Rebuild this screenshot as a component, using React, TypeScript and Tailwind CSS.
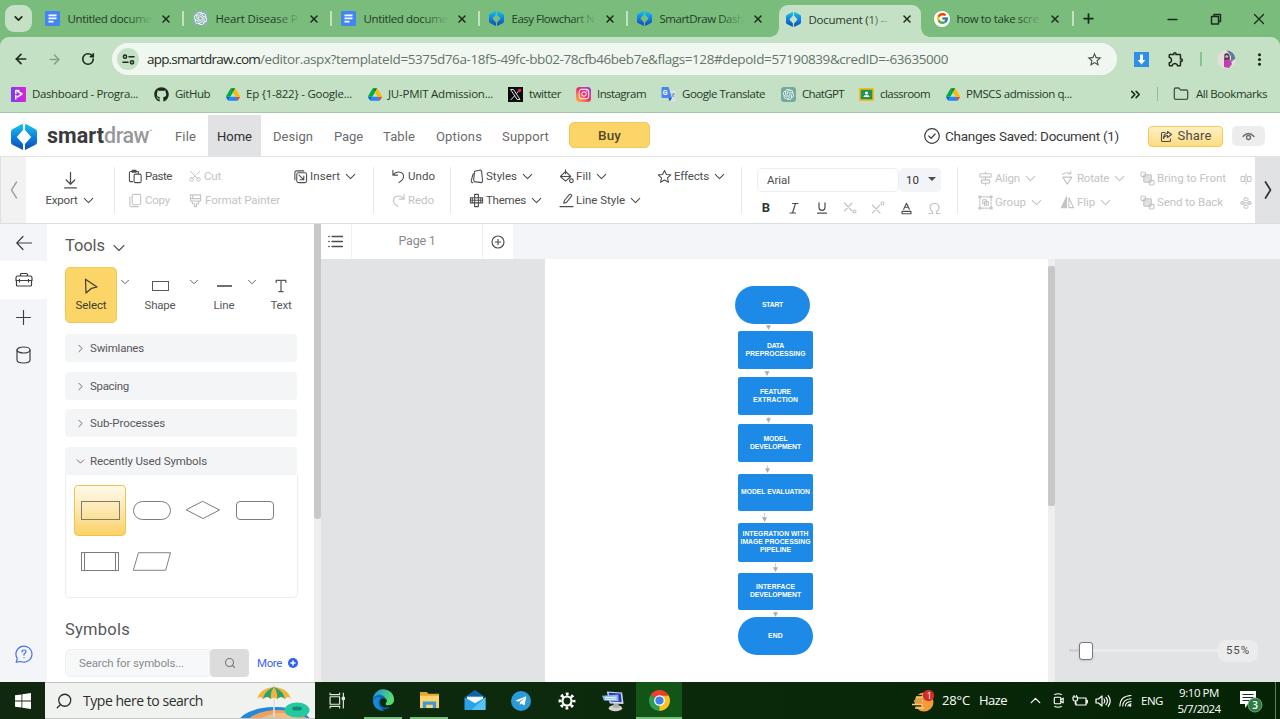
import React, { useLayoutEffect, useRef, useState } from "react";
import { X, Plus, ArrowLeft, ArrowRight, RotateCw, ChevronDown, ChevronUp, ChevronRight, ChevronsRight, Folder, Search, Scissors } from "lucide-react";
import { FaGithub, FaInstagram, FaTelegramPlane } from "react-icons/fa";
import { FcGoogle } from "react-icons/fc";
import { SiOpenai } from "react-icons/si";
import { MdOutlineExtension, MdStarBorder, MdMoreVert } from "react-icons/md";

type Kids = { children?: React.ReactNode };

/* A one-line label whose tracking is computed so that it fills w pixels. */
function Fit({ w, className = "", text }: { w: number; className?: string; text: string }) {
  const ref = useRef<HTMLSpanElement>(null);
  const [gap, setGap] = useState(0);
  useLayoutEffect(() => {
    const el = ref.current;
    if (!el) return;
    el.style.letterSpacing = "0px";
    const natural = el.getBoundingClientRect().width;
    setGap((w - natural) / text.length);
    el.style.letterSpacing = (w - natural) / text.length + "px";
  }, [w, text]);
  return (
    <span ref={ref} className={"inline-block shrink-0 whitespace-nowrap " + className} style={{ letterSpacing: gap }}>
      {text}
    </span>
  );
}

function Svg({ className = "", box = "0 0 16 16", sw = 1, children }: Kids & { className?: string; box?: string; sw?: number }) {
  return (
    <svg viewBox={box} className={"shrink-0 " + className} fill="none" stroke="currentColor" strokeWidth={sw} strokeLinecap="round" strokeLinejoin="round">
      {children}
    </svg>
  );
}

/* ---------- logos ---------- */
const DocsIcon = () => (
  <Svg className="size-[15px]" box="0 0 15 15" sw={1.7}>
    <rect width="15" height="15" rx="1.2" fill="#4285f4" stroke="none" />
    <path d="M3.5 4.3h8M3.5 7.4h8M3.5 10.6h5" stroke="#fff" strokeLinecap="butt" />
  </Svg>
);

const SmartLogo = ({ className = "size-[15px]" }: { className?: string }) => (
  <svg viewBox="0 0 26 26" className={"shrink-0 " + className}>
    <defs>
      <linearGradient id="sd" x1="0" y1="0" x2="0" y2="1">
        <stop offset="0" stopColor="#14c4f0" />
        <stop offset="0.5" stopColor="#1080dd" />
        <stop offset="1" stopColor="#0a4fb4" />
      </linearGradient>
    </defs>
    <path fill="url(#sd)" d="M12 0v6L5.800 13l6.200 7v6L1.500 20.800Q0 20 0 18.300V7.700Q0 6 1.500 5.200L10 .6Z" />
    <path fill="url(#sd)" d="M14 0v6L20.200 13 14 20v6L24.500 20.800Q26 20 26 18.300V7.700Q26 6 24.500 5.200L16 .6Z" />
  </svg>
);

const GptIcon = () => (
  <span className="flex size-[15px] shrink-0 items-center justify-center rounded-[3px] bg-[#74aa9c] text-white">
    <SiOpenai className="size-[11px]" />
  </span>
);

const HeartGpt = () => (
  <span className="flex size-[15px] shrink-0 items-center justify-center rounded-[3px] bg-[#86b3a9] text-white">
    <SiOpenai className="size-[13px]" />
  </span>
);

const GoogleIcon = () => (
  <span className="flex size-[16px] shrink-0 items-center justify-center rounded-full bg-white">
    <FcGoogle className="size-[13px]" />
  </span>
);

const DriveIcon = () => (
  <svg viewBox="0 0 87.3 78" className="h-[13px] w-[14px] shrink-0">
    <path d="m6.600 66.850 3.850 6.650c.8 1.400 1.950 2.500 3.300 3.300l13.750-23.800h-27.500c0 1.550.4 3.100 1.200 4.500z" fill="#0066da" />
    <path d="m43.650 25-13.750-23.800c-1.350.8-2.500 1.900-3.300 3.300l-25.400 44a9.060 9.060 0 0 0-1.200 4.500h27.500z" fill="#00ac47" />
    <path d="m73.550 76.800c1.350-.8 2.500-1.900 3.300-3.300l1.600-2.750 7.650-13.250c.8-1.400 1.200-2.950 1.200-4.500h-27.500l5.850 11.500z" fill="#ea4335" />
    <path d="m43.650 25 13.750-23.800c-1.350-.8-2.900-1.200-4.500-1.200h-18.500c-1.600 0-3.150.45-4.500 1.200z" fill="#00832d" />
    <path d="m59.800 53h-32.300l-13.750 23.800c1.350.8 2.900 1.200 4.500 1.200h50.800c1.600 0 3.150-.45 4.500-1.200z" fill="#2684fc" />
    <path d="m73.400 26.500-12.700-22c-.8-1.400-1.950-2.500-3.300-3.300l-13.750 23.800 16.150 28h27.450c0-1.550-.4-3.100-1.200-4.500z" fill="#ffba00" />
  </svg>
);

const PhitronIcon = () => (
  <Svg className="size-[15px]" box="0 0 15 15" sw={1.5}>
    <defs>
      <linearGradient id="ph" x1="0" y1="0" x2="1" y2="0">
        <stop offset="0" stopColor="#7a3cf5" />
        <stop offset="1" stopColor="#e21fd8" />
      </linearGradient>
    </defs>
    <rect width="15" height="15" rx="1" fill="url(#ph)" stroke="none" />
    <path d="M4.800 12V8.500M4.800 6.500v-3l3 0M7 4.500l4 2.500-4.500 2.800" stroke="#fff" />
  </Svg>
);

const XIcon = () => (
  <Svg className="size-[15px]" box="0 0 15 15" sw={1}>
    <rect width="15" height="15" fill="#0c0c0c" stroke="none" />
    <path d="M3 2.500h2.500l6.500 10H9.500Z" stroke="#ddd" />
    <path d="M12 2.500 8.500 6.500M6.500 9 3 12.700" stroke="#ddd" />
    <circle cx="11.500" cy="3.500" r="1.700" fill="#ee2244" stroke="none" />
  </Svg>
);

const InstaIcon = () => (
  <span className="flex size-[15px] shrink-0 items-center justify-center rounded-[3.500px] bg-linear-to-tr from-[#fdc030] via-[#f02b60] to-[#9a30d0] text-white">
    <FaInstagram className="size-[12px]" />
  </span>
);

const TranslateIcon = () => (
  <svg viewBox="0 0 15 15" className="size-[15px] shrink-0">
    <path d="M6 4h7.500q1 0 1 1v8.500q0 1-1 1H9Z" fill="#dfe3e8" />
    <path d="M1.500 0H7.600L11 11H1.500q-1 0-1-1V1q0-1 1-1Z" fill="#4a86f0" />
    <path d="M7.500 11H11l-2.300 3.500Z" fill="#2a56c6" />
    <text x="1.800" y="8" fontSize="7" fontWeight="700" fill="#fff" fontFamily="Roboto, sans-serif">G</text>
    <path d="M10.500 7h3.500M12.300 6v1M11 9.500q2-1 2.300-2.500M11.400 8l2 2.500" stroke="#7b8794" strokeWidth=".8" fill="none" />
  </svg>
);

const ClassroomIcon = () => (
  <svg viewBox="0 0 15 13" className="h-[13px] w-[15px] shrink-0">
    <rect width="15" height="13" rx="1" fill="#f6bd17" />
    <rect x="1.700" y="1.700" width="11.600" height="9.600" fill="#23915a" />
    <circle cx="7.500" cy="5" r="1.500" fill="#fff" />
    <path d="M4.500 9q0-2 3-2t3 2Z" fill="#fff" />
  </svg>
);

/* ---------- browser chrome ---------- */
const ui = "font-['Open_Sans','Noto_Sans',sans-serif]";
const app = "font-['Roboto','Liberation_Sans',sans-serif]";

function Tab({ icon, label, w, active, tail = true }: { icon: React.ReactNode; label: string; w: number; active?: boolean; tail?: boolean }) {
  return (
    <div className="flex w-[148px] shrink-0 items-center">
      <div className="flex w-[22.500px] shrink-0">{icon}</div>
      <div className="relative w-[85px] shrink-0 pt-px text-[11.500px] leading-[18px] text-[#263a28]">
        <Fit w={w} text={label} />
        <span className={"absolute inset-y-0 right-0 w-[26px] bg-linear-to-r from-transparent " + (active ? "to-[#c5e1c5]" : "to-[#79bc7c]")} />
      </div>
      <X className="ml-[7.500px] size-[12px] text-[#1c2a1d]" strokeWidth={3} />
      <span className={"ml-[10px] h-[15px] w-[1.500px] " + (tail ? "bg-[#c0e2c0]" : "")} />
    </div>
  );
}

function TabStrip() {
  return (
    <div className="flex h-[37px] shrink-0 items-center bg-[#79bc7c]">
      <div className="ml-[5px] flex h-[27px] w-[27px] shrink-0 items-center justify-center rounded-[9px] bg-[#c5e1c5]">
        <ChevronDown className="size-[13px] text-[#1c2a1d]" strokeWidth={3.200} />
      </div>
      <div className="ml-[13px] flex h-full">
        <Tab icon={<DocsIcon />} label="Untitled docume" w={84} />
        <Tab icon={<HeartGpt />} label="Heart Disease P" w={82} />
        <Tab icon={<DocsIcon />} label="Untitled docume" w={84} />
        <Tab icon={<SmartLogo />} label="Easy Flowchart N" w={83} />
        <Tab icon={<SmartLogo />} label="SmartDraw Dash" w={84} tail={false} />
      </div>
      <div className="-mx-[6px] flex h-full w-[154px] items-end">
        <div className="relative flex h-[32px] w-[142px] items-center rounded-t-[9px] bg-[#c5e1c5] pl-[7px] pb-[4px]">
          <span className="absolute bottom-0 -left-[9px] size-[9px] bg-[radial-gradient(circle_at_top_left,#79bc7c_8.500px,#c5e1c5_9px)]" />
          <span className="absolute -right-[9px] bottom-0 size-[9px] bg-[radial-gradient(circle_at_top_right,#79bc7c_8.500px,#c5e1c5_9px)]" />
          <Tab icon={<SmartLogo />} label="Document (1) --" w={79} active tail={false} />
        </div>
      </div>
      <div className="ml-[7px] flex h-full">
        <Tab icon={<GoogleIcon />} label="how to take scre" w={82} tail={false} />
      </div>
      <span className="-ml-[10px] h-[15px] w-[1.500px] bg-[#c0e2c0]" />
      <Plus className="ml-[7px] size-[15px] text-[#1c2a1d]" strokeWidth={2.800} />
      <Svg className="ml-auto size-[12px] text-[#1c2a1d]" box="0 0 12 12" sw={1.300}><path d="M1 6.500h9" /></Svg>
      <Svg className="ml-[31px] size-[12px] text-[#1c2a1d]" box="0 0 12 12" sw={1.400}><path d="M1.500 3.500h7v7.500h-7ZM4 3.500v-2h6.500v7H8.500" /></Svg>
      <Svg className="mr-[15px] ml-[31px] size-[12px] text-[#1c2a1d]" box="0 0 12 12" sw={1.300}><path d="m1.500 1.500 9 9M10.500 1.500l-9 9" /></Svg>
    </div>
  );
}

function AddressRow() {
  return (
    <div className="flex h-[44px] shrink-0 items-center">
      <ArrowLeft className="ml-[13px] size-[16px] text-[#1c2a1d]" strokeWidth={2.500} />
      <ArrowRight className="ml-[18px] size-[15px] text-[#84a286]" strokeWidth={2.300} />
      <RotateCw className="ml-[19px] size-[14px] text-[#1c2a1d]" strokeWidth={2.800} />
      <div className="ml-[17px] flex h-[32px] w-[1005px] shrink-0 items-center rounded-full bg-[#f0f7f0] text-[13.500px] text-[#66746a]">
        <div className="ml-[5px] flex size-[22px] items-center justify-center rounded-full bg-[#c5e1c5] text-[#1c2a1d]">
          <Svg className="size-[13px]" box="0 0 13 13" sw={1.500}>
            <circle cx="3" cy="3.700" r="1.600" /><path d="M7 3.700h5M1 9.300h5" /><circle cx="10" cy="9.300" r="1.600" />
          </Svg>
        </div>
        <Fit w={113} className="ml-[8px] text-[#1f2b21]" text="app.smartdraw.com" />
        <Fit w={688} text="/editor.aspx?templateId=5375d76a-18f5-49fc-bb02-78cfb46beb7e&flags=128#depoId=57190839&credID=-63635000" />
        <MdStarBorder className="mr-[14px] ml-auto size-[17px] text-[#47554a]" />
      </div>
      <svg viewBox="0 0 15 15" className="ml-[17px] size-[15px] shrink-0"><rect width="15" height="15" fill="#2f8fe6" /><path d="M6 2.500h3V8h2.300L7.500 12.500 3.700 8H6Z" fill="#fff" /></svg>
      <MdOutlineExtension className="ml-[18px] size-[18px] text-[#1c2a1d]" />
      <span className="ml-[15px] h-[14px] w-[1.500px] bg-[#86c489]" />
      <svg viewBox="0 0 19 19" className="ml-[15px] size-[19px] shrink-0">
        <circle cx="9.500" cy="9.500" r="9.300" fill="#e6dcdc" />
        <path d="M9.500 .4a9 9 0 0 1 9 8L14 12V6Z" fill="#5c7f9c" />
        <path d="M7.500 4q3.500-2 5 1.500l.5 8-6 1Z" fill="#41304a" />
        <path d="m7 10 6-1 2 5-3 4-5-1Z" fill="#c03fae" />
        <circle cx="9.800" cy="6.500" r="1.600" fill="#dba893" />
      </svg>
      <MdMoreVert className="ml-[14px] size-[19px] text-[#1c2a1d]" />
    </div>
  );
}

function Mark({ icon, text, w, pad, drive }: { icon?: React.ReactNode; text: string; w: number; pad: string; drive?: boolean }) {
  return (
    <div className={"flex shrink-0 items-center " + pad}>
      <span className={"flex shrink-0 " + (drive ? "w-[20px]" : "w-[21px]")}>{drive ? <DriveIcon /> : icon}</span>
      <Fit w={w} text={text} />
    </div>
  );
}

function Bookmarks() {
  return (
    <div className="flex h-[30px] shrink-0 items-center pl-[11px] pb-[4px] text-[11.500px] leading-[16px] text-[#263a28]">
      <Mark icon={<PhitronIcon />} text="Dashboard - Progra..." w={106} pad="pr-[16px]" />
      <Mark icon={<FaGithub className="size-[15px] text-[#1c2a1d]" />} text="GitHub" w={35} pad="pr-[16px]" />
      <Mark drive text="Ep {1-822} - Google..." w={106} pad="pr-[16px]" />
      <Mark drive text="JU-PMIT Admission..." w={105} pad="pr-[15px]" />
      <Mark icon={<XIcon />} text="twitter" w={32} pad="pr-[15px]" />
      <Mark icon={<InstaIcon />} text="Instagram" w={49} pad="pr-[15px]" />
      <Mark icon={<TranslateIcon />} text="Google Translate" w={83} pad="pr-[16px]" />
      <Mark icon={<GptIcon />} text="ChatGPT" w={42} pad="pr-[15px]" />
      <Mark icon={<ClassroomIcon />} text="classroom" w={50} pad="pr-[16px]" />
      <Mark drive text="PMSCS admission q..." w={106} pad="" />
      <ChevronsRight className="ml-auto size-[15px] text-[#1c2a1d]" strokeWidth={2.600} />
      <span className="ml-[14px] h-[14px] w-[1.500px] bg-[#86c489]" />
      <Folder className="ml-[15px] size-[16px] text-[#47554a]" strokeWidth={2} />
      <Fit w={71} className="mr-[13px] ml-[7px]" text="All Bookmarks" />
    </div>
  );
}

/* ---------- application header ---------- */
function Header() {
  return (
    <div className="flex h-[43px] shrink-0 items-center border-b border-[#e2e2e3] bg-white text-[13px] text-[#6b6b6d]">
      <SmartLogo className="mt-[3px] ml-[11px] h-[26px] w-[26px]" />
      <div className="ml-[10px] flex h-full w-[106px] shrink-0 items-center pt-[2px] text-[21.500px] font-bold">
        <Fit w={57} className="text-[#3a3a3c]" text="smart" />
        <Fit w={45} className="font-medium text-[#98989a]" text="draw" />
        <span className="mb-[9px] text-[5px] text-[#98989a]">™</span>
      </div>
      <Fit w={21} className="mt-[3px] ml-[22px]" text="File" />
      <div className="ml-[12px] flex h-[41px] w-[53px] shrink-0 items-center justify-center self-end bg-[#e1e2e4] pt-[2px] text-[#2e2e30]">
        <Fit w={35} text="Home" />
      </div>
      <Fit w={40} className="mt-[3px] ml-[12px]" text="Design" />
      <Fit w={29} className="mt-[3px] ml-[21px]" text="Page" />
      <Fit w={32} className="mt-[3px] ml-[20px]" text="Table" />
      <Fit w={46} className="mt-[3px] ml-[21px]" text="Options" />
      <Fit w={47} className="mt-[3px] ml-[20px]" text="Support" />
      <div className="ml-[20px] flex h-[26px] w-[81px] shrink-0 items-center justify-center rounded-[5px] border border-[#f3c65a] bg-[#fbd568] text-[13.500px] text-[#55492a]">
        <Fit w={23} className="font-medium" text="Buy" />
      </div>
      <div className="mt-[2px] ml-[274px] flex shrink-0 items-center text-[13.500px] text-[#3a3a3c]">
        <Svg className="size-[16px]" sw={1.200}><circle cx="8" cy="8" r="7.300" /><path d="m4.800 8 2.300 2.300 4-4.300" /></Svg>
        <Fit w={174} className="ml-[5px]" text="Changes Saved: Document (1)" />
      </div>
      <div className="mt-[2px] ml-[29px] flex h-[21px] w-[75px] shrink-0 items-center justify-center rounded-[4px] border border-[#f5c85c] bg-linear-to-b from-[#fff0c4] to-[#fcdc80] text-[13px] text-[#4c4c4c]">
        <Svg className="size-[13px]" box="0 0 13 13" sw={1.100}><path d="M5 2.500H2.500q-1 0-1 1v7q0 1 1 1h7q1 0 1-1V9M7.500 1.500l4 3-4 3v-2q-3 0-4 3 0-5 4-5Z" /></Svg>
        <Fit w={34} className="ml-[5px]" text="Share" />
      </div>
      <div className="mt-[2px] ml-[9px] flex h-[20px] w-[33px] shrink-0 items-center justify-center rounded-[5px] bg-[#ededee] text-[#6a6a6c]">
        <Svg className="size-[13px]" box="0 0 13 13" sw={1.300}><path d="M1 6.500q5.500-6 11 0" /><circle cx="6.500" cy="7.500" r="2" /></Svg>
      </div>
    </div>
  );
}

/* ---------- ribbon ---------- */
const glyph = {
  paste: <><path d="M5 13.500H3q-1.500 0-1.500-1.500V4Q1.500 2.700 3 2.700h8V5" /><path d="M4.500 1.500h4v2h-4z" /><rect x="6.500" y="5.500" width="7.500" height="9" rx="1.500" /></>,
  copy: <><rect x="4.500" y="1.500" width="9" height="11" rx="1.500" /><path d="M2 4v9q0 1.500 1.500 1.500H11" /></>,
  painter: <><path d="M2.500 2h11v6.500h-11zM2.500 6h11M5 2v4M4 8.500l1 3h2v3h2v-3h2l1-3" /></>,
  insert: <><rect x="4" y="4" width="10.500" height="10.500" rx="2" /><path d="M2 11.500V4q0-2 2-2h7.500M6.500 6.500l5 5M11.500 7.500v4h-4" /></>,
  undo: <><path d="M2 1.500v5h5M2 6.500Q5.500 2 10 3.500t3 6.500q-.8 2-4.500 4.500" /></>,
  redo: <><path d="M14 1.500v5H9M14 6.500Q10.500 2 6 3.500T3 10q.8 2 4.500 4.500" /></>,
  styles: <><path d="M6 2.500 12.500 1l1 1.500 1 10.500-1 1.500-8-1-.5-2L6 2.500M4.500 5 2.500 12q-.5 2.500 1.500 2.500" /></>,
  themes: <><path d="M6 1.500h4v13H6zM1.500 5h13v5.500h-13zM3.500 5v5.500M12.500 5v5.500M1.500 7.700h13" /></>,
  fill: <><path d="M7 2.500 12.500 8 7 13 1.500 8ZM1.500 8h11M7 .8V5" /><circle cx="13.200" cy="12.500" r="2" /></>,
  line: <><path d="m5 11 .8-3L11 1.800q1-1 2 0t0 2L8 10ZM1 14.500h14" /></>,
  effects: <><path d="m8 1.500 2 4.300 4.700.5-3.500 3.200 1 4.700L8 11.800l-4.200 2.400 1-4.700L1.300 6.300 6 5.800Z" /></>,
  align: <><path d="M8 1v2M8 6.500v3M8 13v2" /><rect x="2" y="3" width="12" height="3.500" rx="1" /><rect x="3.500" y="9.500" width="9" height="3.500" rx="1" /></>,
  group: <><rect x="2" y="2" width="12" height="12" strokeDasharray="2 1.500" /><path d="M1 1h2v2H1zM13 1h2v2h-2zM1 13h2v2H1zM13 13h2v2h-2zM5 5h4v4H5zM7 7h4v4H7z" /></>,
  rotate: <><path d="M3 6.500h9.500L7.700 14ZM3 3.500q3-3 8.500-.5M11.500.5V3H9" /></>,
  flip: <><path d="M7 2v11.500H1.500Z" fill="currentColor" /><path d="M9.500 3v10.500h5Z" /></>,
  front: <><rect x="1" y="1" width="5" height="5" rx="1.500" /><rect x="4" y="4" width="8" height="8" rx="1" fill="currentColor" fillOpacity=".5" /><rect x="10" y="10" width="5" height="5" rx="1.500" /></>,
};

/* A chevron whose drawn width is a little over half of its box. */
const Caret = ({ className = "" }: { className?: string }) => (
  <ChevronDown className={"-mr-[2px] ml-[2px] size-[17px] shrink-0 " + className} strokeWidth={1.500} />
);

function Item({ g, w, text, off, drop }: { g: React.ReactNode; w: number; text: string; off?: boolean; drop?: boolean }) {
  return (
    <div className={"flex h-[24px] items-center " + (off ? "text-[#c3c3c5]" : "text-[#4d4d50]")}>
      <Svg className="mr-[2px] size-[15px]" sw={1.150}>{g}</Svg>
      <Fit w={w} text={text} />
      {drop && <Caret />}
    </div>
  );
}

const Col = ({ className, children }: Kids & { className: string }) => <div className={"shrink-0 " + className}>{children}</div>;
const Rule = () => <span className="mt-[10px] h-[46px] w-px shrink-0 bg-[#e9e9ea]" />;

function Ribbon() {
  return (
    <div className={"flex h-[67px] shrink-0 overflow-hidden border-b border-[#dcddde] bg-white text-[11.500px] leading-[16px] " + app}>
      <div className="flex w-[26px] shrink-0 items-center justify-center border-l border-[#dfdfe0] bg-[#f2f2f3] text-[#a5a5a7]">
        <Svg className="h-[18px] w-[8px]" box="0 0 8 18" sw={1.500}><path d="M6.500 1 1.500 9l5 8" /></Svg>
      </div>
      <div className="flex w-[88px] shrink-0 flex-col items-center pt-[15px] text-[#4d4d50]">
        <Svg className="size-[17px]" sw={1.200}><path d="M8 .5v11M4 7.500l4 4 4-4M2.500 15h11" /></Svg>
        <div className="mt-[3px] flex h-[16px] items-center"><Fit w={32} text="Export" /><Caret /></div>
      </div>
      <Rule />
      <Col className="w-[61px] pt-[7px] pl-[13px]">
        <Item g={glyph.paste} w={27} text="Paste" />
        <Item g={glyph.copy} w={25} text="Copy" off />
      </Col>
      <Col className="w-[106px] pt-[7px] pl-[12px]">
        <div className="flex h-[24px] items-center text-[#c3c3c5]">
          <Scissors className="mr-[2px] size-[14px] -rotate-90" strokeWidth={1.700} />
          <Fit w={17} text="Cut" />
        </div>
        <Item g={glyph.painter} w={75} text="Format Painter" off />
      </Col>
      <Col className="w-[91px] pt-[7px] pl-[11px]"><Item g={glyph.insert} w={30} text="Insert" drop /></Col>
      <Rule />
      <Col className="w-[76px] pt-[7px] pl-[17px]">
        <Item g={glyph.undo} w={27} text="Undo" />
        <Item g={glyph.redo} w={26} text="Redo" off />
      </Col>
      <Rule />
      <Col className="w-[108px] pt-[7px] pl-[18px]">
        <Item g={glyph.styles} w={31} text="Styles" drop />
        <Item g={glyph.themes} w={40} text="Themes" drop />
      </Col>
      <Col className="w-[98px] pt-[7px]">
        <Item g={glyph.fill} w={15} text="Fill" drop />
        <Item g={glyph.line} w={49} text="Line Style" drop />
      </Col>
      <Col className="w-[84px] pt-[7px]"><Item g={glyph.effects} w={35} text="Effects" drop /></Col>
      <Rule />
      <div className="w-[215px] shrink-0 pt-[11px] pl-[15px] text-[#4d4d50]">
        <div className="flex h-[24px]">
          <div className="flex w-[142px] items-center rounded-[5px] border border-[#ececee] pl-[9px]"><Fit w={23} text="Arial" /></div>
          <div className="flex w-[42px] items-center rounded-[5px] bg-[#f3f4f7] pl-[7px]">
            <Fit w={13} className="text-[#333]" text="10" />
            <svg viewBox="0 0 8 4" className="mb-[3px] ml-[9px] h-[4px] w-[8px]"><path d="M0 0h8L4 4Z" fill="#4d4d50" /></svg>
          </div>
        </div>
        <div className="-ml-[5px] grid h-[32px] w-[196px] grid-cols-7 place-items-center text-[13px]">
          <b className="text-[#333]">B</b>
          <Svg className="size-[12px]" box="0 0 12 12" sw={1.200}><path d="M4.500 1.500h5.500M2 11h5.500M7.500 1.500 4.500 11" /></Svg>
          <Svg className="size-[12px]" box="0 0 12 12" sw={1.200}><path d="M3 .8v4.500q0 3 3 3t3-3V.8M1.500 11.200h9" /></Svg>
          <Svg className="size-[14px] text-[#c3c3c5]" box="0 0 14 14" sw={1.100}><path d="m1.500 2 7.500 8M9 2l-7.500 8" /><circle cx="11.500" cy="10.500" r="1.500" /></Svg>
          <Svg className="size-[14px] text-[#c3c3c5]" box="0 0 14 14" sw={1.100}><path d="m1.500 4 7.500 8M9 4l-7.500 8" /><circle cx="11.500" cy="2.500" r="1.500" /></Svg>
          <Svg className="size-[13px]" sw={1.400}><path d="M4.500 9 8 1.500 11.500 9M5.800 6.500h4.400M2.500 11.500h11v3h-11z" /></Svg>
          <Svg className="size-[13px] text-[#c3c3c5]" box="0 0 13 13" sw={1.200}><path d="M1 11.500h3.500V9.500Q2 8 2 5.500 2 1.500 6.500 1.500T11 5.500Q11 8 8.500 9.500v2H12" /></Svg>
        </div>
      </div>
      <Rule />
      <Col className="w-[102px] pt-[9px] pl-[20px]">
        <Item g={glyph.align} w={25} text="Align" off drop />
        <Item g={glyph.group} w={31} text="Group" off drop />
      </Col>
      <Col className="w-[80px] pt-[9px]">
        <Item g={glyph.rotate} w={32} text="Rotate" off drop />
        <Item g={glyph.flip} w={18} text="Flip" off drop />
      </Col>
      <Col className="w-[100px] pt-[9px]">
        <Item g={glyph.front} w={69} text="Bring to Front" off />
        <Item g={glyph.front} w={66} text="Send to Back" off />
      </Col>
      <div className="flex w-[15px] shrink-0 flex-col justify-center gap-[12px] pt-[1px] text-[#c3c3c5]">
        <Svg className="size-[12px]" box="0 0 12 12"><path d="M6 1v10M4 3.500H1v5h3ZM8 3.500h3v5H8Z" /></Svg>
        <Svg className="size-[12px]" box="0 0 12 12"><path d="M1 6h10" /><rect x="4" y=".8" width="4" height="3" rx="1" /><rect x="4" y="8.200" width="4" height="3" rx="1" /><rect x="1" y="4.500" width="3" height="3" rx="1" /><rect x="8" y="4.500" width="3" height="3" rx="1" /></Svg>
      </div>
      <div className="flex grow items-center justify-center bg-[#e1e2e4] text-[#333]">
        <Svg className="h-[18px] w-[8px]" box="0 0 8 18" sw={1.700}><path d="m1.500 1 5 8-5 8" /></Svg>
      </div>
    </div>
  );
}

/* ---------- left side ---------- */
function Rail() {
  return (
    <div className="flex w-[47px] shrink-0 flex-col items-center bg-[#f3f5f8] text-[#3f3f42]">
      <div className="flex h-[37px] items-center"><Svg className="size-[16px]" sw={1.200}><path d="M15.500 8H1M7 1.500 .8 8 7 14.500" /></Svg></div>
      <div className="flex h-[38px] w-full items-center justify-center bg-white">
        <Svg className="size-[18px]" box="0 0 18 18" sw={1.200}><path d="M5.500 5V3.500q0-1 1-1h5q1 0 1 1V5M2 5h14l1 1.500v3H1v-3ZM1.500 9.500h15V14q0 1-1 1h-13q-1 0-1-1ZM4.500 8.300v2.700M13.500 8.300v2.700" /></Svg>
      </div>
      <div className="flex h-[37px] items-center"><Svg className="size-[15px]" sw={1.200}><path d="M8 .5v15M.5 8h15" /></Svg></div>
      <div className="flex h-[38px] items-center"><Svg className="h-[18px] w-[15px]" box="0 0 15 18" sw={1.200}><ellipse cx="7.500" cy="4" rx="6.500" ry="3" /><path d="M1 4v10q0 3 6.500 3t6.500-3V4" /></Svg></div>
      <div className="mt-auto mb-[19px] text-[#4a72f0]">
        <Svg className="size-[18px]" box="0 0 18 18" sw={1.200}><path d="M2.300 13.500A8 8 0 1 1 6 16.500l-4.800.7Z" /><path d="M7 7q0-2 2-2t2 1.800q0 1.200-2 2.200v1.200M9 12.500v.2" /></Svg>
      </div>
    </div>
  );
}

function Tool({ icon, text, w, className }: { icon: React.ReactNode; text: string; w: number; className: string }) {
  return (
    <div className={"flex h-[56px] shrink-0 flex-col items-center " + className}>
      <div className="flex h-[20px] items-center">{icon}</div>
      <Fit w={w} className="mt-[1px]" text={text} />
    </div>
  );
}

const Drop = ({ className }: { className: string }) => <ChevronDown className={"mt-[8px] -mr-[2px] size-[14px] shrink-0 " + className} strokeWidth={1.600} />;

function Section({ text, w, open }: { text: string; w: number; open?: boolean }) {
  const C = open ? ChevronDown : ChevronRight;
  return (
    <div className={"flex h-[28px] shrink-0 items-center rounded-[4px] bg-[#f4f5f7] pl-[9px] " + (open ? "rounded-b-none" : "mb-[9.500px]")}>
      <C className="mt-px size-[13px]" strokeWidth={1.600} />
      <Fit w={w} className="ml-[3px]" text={text} />
    </div>
  );
}

function Panel() {
  return (
    <div className={"flex w-[267px] shrink-0 flex-col overflow-hidden bg-white pr-[17px] pl-[18px] text-[11.500px] leading-[16px] text-[#58585b] " + app}>
      <div className="mt-[12px] flex h-[20px] shrink-0 items-center text-[16.500px]">
        <Fit w={40} text="Tools" />
        <ChevronDown className="mt-[3px] ml-[4px] size-[20px]" strokeWidth={1.400} />
      </div>
      <div className="mt-[11px] flex h-[56px] shrink-0">
        <Tool className="w-[52px] rounded-[5px] border border-[#f3c65a] bg-[#fbd568] pt-[8px] text-[#3f3c33]" w={31} text="Select"
          icon={<Svg className="size-[16px]" sw={1.200}><path d="M2.500 1.200 14 9 8.500 10.300 3 15Z" /></Svg>} />
        <Drop className="ml-[1px]" />
        <Tool className="ml-[14px] w-[32px] pt-[9px]" w={31} text="Shape" icon={<span className="h-[10px] w-[17px] border-[1.500px] border-[#58585b]" />} />
        <Drop className="ml-[11px]" />
        <Tool className="ml-[13px] w-[24px] pt-[9px]" w={21} text="Line" icon={<span className="h-[1.500px] w-[15px] bg-[#6f6f72]" />} />
        <Drop className="ml-[9px]" />
        <Tool className="ml-[12px] w-[24px] pt-[9px]" w={21} text="Text" icon={<Svg className="size-[14px]" sw={1.400}><path d="M2.500 4V1.500h11V4M8 1.500v13M5.500 14.500h5" /></Svg>} />
      </div>
      <div className="mt-[11px] flex shrink-0 flex-col">
        <Section text="Swimlanes" w={54} />
        <Section text="Spacing" w={39} />
        <Section text="Sub-Processes" w={75} />
        <Section text="Recently Used Symbols" w={117} open />
      </div>
      <div className="grid h-[123px] w-[233px] shrink-0 auto-rows-[51.500px] grid-cols-[52px_51px_52px_52px] rounded-b-[5px] border border-t-0 border-[#ececee] pt-[10px] pl-[8px] text-[#7d7d80]">
        <div className="flex items-center justify-center rounded-[4px] border border-[#f0c24e] bg-linear-to-b from-[#fffaec] to-[#fbd264]">
          <span className="h-[19px] w-[39px] border border-[#7d7a70]" />
        </div>
        <div className="flex items-center justify-center"><span className="h-[19px] w-[38px] rounded-full border border-[#7d7d80]" /></div>
        <div className="flex items-center justify-center"><Svg className="h-[20px] w-[36px]" box="0 0 36 20"><path d="M18 1.500 34.500 10 18 18.500 1.500 10Z" /></Svg></div>
        <div className="flex items-center justify-center"><span className="h-[19px] w-[38px] rounded-[4px] border border-[#7d7d80]" /></div>
        <div className="flex items-center justify-center"><span className="flex h-[19px] w-[38px] border border-[#7d7d80] px-[2px]"><span className="grow border-x border-[#7d7d80]" /></span></div>
        <div className="flex items-center justify-center"><Svg className="h-[19px] w-[38px]" box="0 0 39 19"><path d="M6 .5h32.500L33.500 18.500H.7Z" /></Svg></div>
      </div>
      <div className="mt-[21px] flex h-[22px] shrink-0 items-center text-[16.500px]"><Fit w={65} text="Symbols" /></div>
      <div className="mt-[8px] flex h-[28px] shrink-0 items-center">
        <div className="flex h-full w-[145px] shrink-0 items-center rounded-l-[5px] border border-[#f0f1f3] bg-[#f7f8fa] pl-[13px] text-[#8b8b8e]"><Fit w={105} text="Search for symbols..." /></div>
        <div className="flex h-full w-[39px] shrink-0 items-center justify-center rounded-[4px] bg-[#dcdcdd] text-[#77777a]"><Search className="size-[12px]" strokeWidth={2.200} /></div>
        <Fit w={25} className="ml-[8px] text-[#3d66f0]" text="More" />
        <svg viewBox="0 0 10 10" className="ml-[6px] size-[10px] shrink-0"><circle cx="5" cy="5" r="5" fill="#2f62ee" /><path d="M5 2.400v5.200M2.400 5h5.200" stroke="#fff" strokeWidth="1.500" /></svg>
      </div>
    </div>
  );
}

/* ---------- canvas ---------- */
type Line = [string, number];
function Node({ className, lines }: { className: string; lines: Line[] }) {
  return (
    <div className={"absolute flex w-[75px] flex-col items-center justify-center bg-[#1c8ae6] text-[6.800px] leading-[8px] font-bold text-white " + className}>
      {lines.map(([t, w]) => <Fit key={t} w={w} text={t} />)}
    </div>
  );
}

const arrows: [number, number, number][] = [
  [223.500, 66, 70], [222, 112, 116], [223.500, 158, 163], [222.500, 206, 213], [219.500, 254, 262], [230.500, 304, 312], [230.500, 353, 357],
];

function Diagram() {
  return (
    <div className={"relative w-[503px] shrink-0 overflow-hidden bg-white font-['Liberation_Sans',Arial,sans-serif]"}>
      <svg viewBox="0 0 503 423" className="absolute inset-0 h-[423px] w-[503px]">
        {arrows.map(([x, a, b]) => (
          <g key={a}>
            <path d={`M${x} ${a}V${b}`} stroke="#c4c4c6" strokeWidth=".8" />
            <path d={`M${x - 2.500} ${b - 3.800}h5l-2.500 4.800Z`} fill="#adadb0" />
          </g>
        ))}
      </svg>
      <Node className="top-[27px] left-[190px] h-[38px] rounded-full" lines={[["START", 21]]} />
      <Node className="top-[72px] left-[193px] h-[38px] rounded-[2px]" lines={[["DATA", 17], ["PREPROCESSING", 60]]} />
      <Node className="top-[118px] left-[193px] h-[38px] rounded-[2px]" lines={[["FEATURE", 31], ["EXTRACTION", 45]]} />
      <Node className="top-[165px] left-[193px] h-[38px] rounded-[2px]" lines={[["MODEL", 24], ["DEVELOPMENT", 51]]} />
      <Node className="top-[214.500px] left-[193px] h-[37.500px] rounded-[2px]" lines={[["MODEL EVALUATION", 69]]} />
      <Node className="top-[263.500px] left-[193px] h-[39.500px] rounded-[2px]" lines={[["INTEGRATION WITH", 66], ["IMAGE PROCESSING", 70], ["PIPELINE", 31]]} />
      <Node className="top-[313.500px] left-[193px] h-[37.500px] rounded-[2px]" lines={[["INTERFACE", 39], ["DEVELOPMENT", 51]]} />
      <Node className="top-[358px] left-[193px] h-[38px] rounded-full" lines={[["END", 15]]} />
    </div>
  );
}

function Workspace() {
  return (
    <div className="flex min-w-0 grow flex-col">
      <div className={"flex h-[35px] shrink-0 bg-[#f3f5f8] text-[12.500px] text-[#8a8a8d] " + app}>
        <div className="flex w-[30px] items-center justify-center bg-white pr-px text-[#4d4d50]">
          <Svg className="h-[13px] w-[15px]" box="0 0 15 13" sw={1.300}><path d="M4 1.500h10.500M4 6.500h10.500M4 11.500h10.500M.8 1.500h.4M.8 6.500h.4M.8 11.500h.4" /></Svg>
        </div>
        <div className="flex w-[132px] items-center justify-center border-x border-[#f0f0f1] bg-white"><Fit w={37} text="Page 1" /></div>
        <div className="flex w-[30px] items-center justify-center bg-white text-[#4d4d50]">
          <Svg className="size-[14px]" box="0 0 14 14" sw={1.150}><circle cx="7" cy="7" r="6" /><path d="M7 4.300v5.400M4.300 7h5.400" /></Svg>
        </div>
      </div>
      <div className="flex grow bg-[#e2e3e5]">
        <div className="w-[224px] shrink-0" />
        <Diagram />
        <div className="w-[7px] shrink-0 bg-[#eeeeef] pt-[7px]"><div className="h-[240px] rounded-[2px] bg-[#c7c7c9]" /></div>
        <div className="flex grow flex-col justify-end">
          <div className="mb-[20px] ml-[14px] flex h-[23px] items-center">
            <span className="h-[3px] w-[10px] bg-[#d2d3d4]" />
            <span className="h-[18px] w-[14px] rounded-[3px] border-[1.500px] border-[#77777a] bg-white shadow-sm" />
            <span className="h-[3px] w-[125px] bg-[#ececed]" />
            <span className="flex h-[22px] w-[40px] items-center justify-center rounded-[7px] bg-[#ececed] text-[11.500px] text-[#4d4d50]"><Fit w={24} className={app} text="55%" /></span>
          </div>
        </div>
      </div>
    </div>
  );
}

/* ---------- taskbar ---------- */
function Slot({ children, mark, active }: Kids & { mark?: boolean; active?: boolean }) {
  return (
    <div className={"flex h-full w-[46px] shrink-0 flex-col items-center " + (active ? "bg-[#135417]" : "")}>
      <div className="flex h-[35px] items-center pt-[2px]">{children}</div>
      <span className={"h-[2px] " + (active ? "w-full bg-[#76bd79]" : mark ? "w-[38px] bg-[#76bd79]" : "")} />
    </div>
  );
}

function Taskbar() {
  return (
    <div className={"flex h-[37px] shrink-0 items-center bg-linear-to-r from-[#10280f] via-[#0b2a0c] to-[#052305] text-[11.500px] text-white " + ui}>
      <div className="flex w-[45px] shrink-0 justify-center">
        <svg viewBox="0 0 16 16" className="size-[16px]"><path fill="#fff" d="M0 2.300 6.500 1.400v6.200H0ZM7.300 1.300 16 0v7.600H7.300ZM0 8.400h6.500v6.200L0 13.700ZM7.300 8.400H16V16l-8.700-1.300Z" /></svg>
      </div>
      <div className="flex h-full w-[270px] shrink-0 items-center overflow-hidden border-y border-[#c2c6c2] bg-[#f0f2f0] text-[14px] text-[#2d2f2d]">
        <Search className="ml-[10px] size-[18px] -scale-x-100" strokeWidth={1.700} />
        <Fit w={120} className="ml-[10px]" text="Type here to search" />
        <svg viewBox="0 0 76 36" className="ml-auto h-[36px] w-[76px] shrink-0">
          <ellipse cx="36" cy="41" rx="37" ry="17" fill="#2188dc" />
          <ellipse cx="39" cy="43" rx="33" ry="16" fill="#e9a265" />
          <ellipse cx="42" cy="45" rx="26" ry="15" fill="#f2bc85" />
          <path d="M35 2v32" stroke="#e5e0dc" strokeWidth="1.600" />
          <path d="M18 16Q21 5 35 4q14 1 17 12-3-4-6 0-4-4-8 0-3-3-6 0-4-4-8 0-3-4-6 0Z" fill="#f2b43c" />
          <path d="M24 16q1-8 11-12-4 5-3 12-4-4-8 0ZM38 16q1-7-3-12 9 3 11 12-4-4-8 0Z" fill="#2ba36f" />
          <ellipse cx="58" cy="27" rx="12.500" ry="7.500" fill="#25c9a0" />
          <ellipse cx="58" cy="25.500" rx="5" ry="2" fill="#0e8e74" />
        </svg>
      </div>
      <div className="-ml-px flex h-full shrink-0">
        <Slot>
          <Svg className="size-[17px] text-[#dfe6df]" sw={1.100}><path d="M1 4.500h9v7H1zM1 1v1.500h9V1M1 15v-1.500h9V15M13.500 1v14M12.500 5h2v2h-2z" /></Svg>
        </Slot>
        <Slot mark>
          <svg viewBox="0 0 24 24" className="size-[23px]">
            <defs><linearGradient id="eg" x1="0" y1="0" x2="1" y2=".4"><stop offset="0" stopColor="#1d8fe0" /><stop offset="1" stopColor="#5bdc6a" /></linearGradient></defs>
            <path d="M1 12A11 11 0 0 1 23 10.500c.5 5-3.500 6.500-6 6.500-3.500 0-3-1.700-2.300-2.600 1.700-2 .5-5.400-3-5.400C6 9 1 10 1 12Z" fill="url(#eg)" />
            <path d="M1 13c0-5 5-8 9-6.500 3 .8 4.500 3 4.500 5.500-1-3-5-3-6 0-1.500 5 3.500 9 11 6.500A11.500 11.500 0 0 1 1 13Z" fill="#0c62b6" />
            <path d="M1 13c1-4 5-5.500 8.500-3.500C5 12 6 20 13 22.900A11 11 0 0 1 1 13Z" fill="#1687d9" />
          </svg>
        </Slot>
        <Slot mark>
          <svg viewBox="0 0 22 20" className="h-[19px] w-[21px]"><path d="M1 1h7l2 2h11v15H1Z" fill="#e7a52b" /><path d="M1 5h20v13H1Z" fill="#fcd46c" /><path d="M4 18v-7h14v7h-3.500v-3.500h-7V18Z" fill="#3f98d8" /></svg>
        </Slot>
        <Slot>
          <svg viewBox="0 0 23 22" className="h-[21px] w-[22px]"><path d="M.5 7.500 11.500 0l11 7.500Z" fill="#0d62ae" /><path d="M3 7h17v8H3Z" fill="#f5f7f9" /><path d="M.5 7.500 11.500 14l11-6.500V21H.5Z" fill="#2aa1e8" /><path d="m22.500 7.500-15 13.500h15Z" fill="#55c4f5" /></svg>
        </Slot>
        <Slot>
          <span className="flex size-[20px] items-center justify-center rounded-full bg-[#2a9ad8]"><FaTelegramPlane className="mr-px size-[12px]" /></span>
        </Slot>
        <Slot>
          <svg viewBox="0 0 20 20" className="size-[18px]"><circle cx="10" cy="10" r="5" fill="none" stroke="#fff" strokeWidth="2.400" /><circle cx="10" cy="10" r="7.700" fill="none" stroke="#fff" strokeWidth="3.400" strokeDasharray="3 3.047" strokeDashoffset="1.500" /></svg>
        </Slot>
        <Slot>
          <svg viewBox="0 0 24 22" className="h-[22px] w-[23px]"><ellipse cx="14" cy="18.500" rx="7" ry="3.200" fill="#d3d3cc" /><path d="m12 13 5 0 1 5h-6Z" fill="#aaa" /><path d="M5 1 21 2l1.500 12L8 13.500Z" fill="#cdd2e8" /><path d="m7 2.500 12.500.8 1 8.700L9 11.500Z" fill="#2435b5" /><path d="M0 5.500 17 4.300l.5 7L2 10.500Z" fill="#7fb6e8" /><path d="M3 7.200h12M3 9.200h12" stroke="#fff" /></svg>
        </Slot>
        <Slot active>
          <svg viewBox="0 0 24 24" className="size-[23px]">
            <path d="M12 12 2.500 6.500A11 11 0 0 1 21.500 6.500Z" fill="#e8412f" />
            <path d="M12 12 2.500 6.500A11 11 0 0 0 12 23l4.500-8.500Z" fill="#2da04d" />
            <path d="M12 12h0L12 23A11 11 0 0 0 21.500 6.500H12Z" fill="#fbc31c" />
            <path d="M12 6.500h9.500" stroke="#e8412f" />
            <circle cx="12" cy="12" r="5.600" fill="#fff" /><circle cx="12" cy="12" r="4.300" fill="#3f82ee" />
          </svg>
        </Slot>
      </div>
      <svg viewBox="0 0 25 24" className="ml-[229px] h-[24px] w-[25px] shrink-0">
        <circle cx="13" cy="13" r="9.500" fill="#f29b38" />
        <path d="M0 16.500h10M1 12h10M4 7h7" stroke="#0b2a0c" strokeWidth="2" />
        <path d="M5 8h8M3 12h9M1 15.500h11M4 19h9" stroke="#f7cf7c" strokeWidth="1.600" />
        <circle cx="17.500" cy="6.500" r="5.700" fill="#cf2d2a" />
        <text x="15.800" y="9.700" fontSize="9" fill="#fff" fontFamily="Open Sans, sans-serif">1</text>
      </svg>
      <Fit w={28} className="ml-[6px] text-[13px]" text="28°C" />
      <Fit w={28} className="ml-[9px] text-[13px]" text="Haze" />
      <ChevronUp className="ml-[20px] size-[17px]" strokeWidth={1.800} />
      <Svg className="ml-[7px] size-[15px]" sw={1.200}><rect x="3.500" y="4.500" width="7" height="7" rx="1" /><path d="M10.500 7 13 5.500v5L10.500 9M4 1.500q3.500-1.500 7 0M4 14.500q3.500 1.500 7 0" /></Svg>
      <Svg className="ml-[6px] size-[16px]" sw={1.200}><path d="M6.500 5H14v7H4V9.500M14 7.300h1.300v2.500H14M1 4h4.500v2.500q0 1.500-2.200 1.500T1 6.500ZM2 2.500V4M4.500 2.500V4M3.300 8v3" /></Svg>
      <Svg className="ml-[7px] size-[16px]" sw={1.200}><path d="M1 6h2.500L7 3v10L3.500 10H1ZM9 6q1.500 2 0 4M11 4.300q3 3.700 0 7.400M13.200 2.700q4 5.300 0 10.600" /></Svg>
      <Svg className="ml-[8px] size-[13px]" box="0 0 14 14" sw={1.100}><path d="M1 13Q1 2 13 1.500M4 13q0-7.500 9-8M7 13q0-4.500 6-5M9.500 13q.5-2 3.500-2.500" /><circle cx="12" cy="12.500" r=".8" /></Svg>
      <Fit w={22} className="ml-[9px]" text="ENG" />
      <div className="ml-[14px] flex w-[44px] shrink-0 flex-col items-center leading-[16px]">
        <Fit w={40} text="9:10 PM" />
        <Fit w={43} text="5/7/2024" />
      </div>
      <svg viewBox="0 0 26 26" className="ml-[18px] h-[26px] w-[26px] shrink-0">
        <path d="M1 3h16v13H9l-3 4v-4H1Z" fill="#fff" />
        <path d="M3.500 6.500h11M3.500 9.500h11M3.500 12.500h7" stroke="#14351a" strokeWidth="1.200" />
        <circle cx="16" cy="17" r="7" fill="#2a7d3f" stroke="#6fa67a" strokeWidth="1" />
        <text x="13.300" y="20.800" fontSize="10" fontWeight="600" fill="#fff" fontFamily="Open Sans, sans-serif">3</text>
      </svg>
      <span className="mr-[4px] ml-auto h-full w-px bg-[#5e7a5e]" />
    </div>
  );
}

export default function App() {
  return (
    <div className={"flex h-[719px] w-[1280px] flex-col overflow-hidden bg-white " + ui}>
      <TabStrip />
      <div className="shrink-0 bg-[#79bc7c]">
        <div className="h-[76px] rounded-t-[9px] border-b border-[#a8c6a9] bg-[#c5e1c5]">
          <AddressRow />
          <Bookmarks />
        </div>
      </div>
      <div className={"shrink-0 pt-px " + app}><Header /></div>
      <Ribbon />
      <div className="flex min-h-0 grow">
        <Rail />
        <Panel />
        <div className="w-[7px] shrink-0 bg-[#eeeeef]"><div className="h-[295px] rounded-b-[3px] bg-[#c8c8c9]" /></div>
        <Workspace />
      </div>
      <Taskbar />
    </div>
  );
}
